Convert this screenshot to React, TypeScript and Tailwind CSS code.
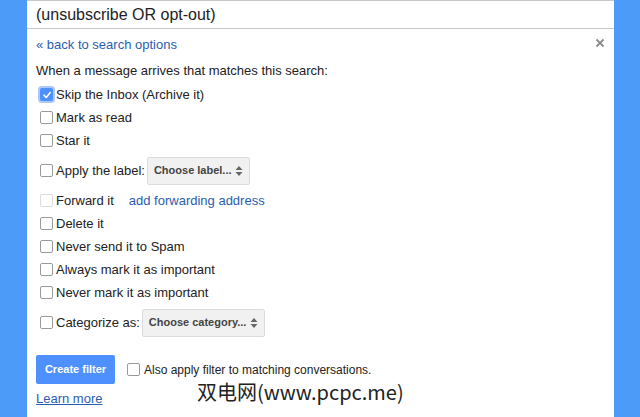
import React from "react";

function Box({ checked = false, disabled = false }: { checked?: boolean; disabled?: boolean }) {
  if (checked) {
    return (
      <span className="relative flex h-[13px] w-[13px] shrink-0 items-center justify-center rounded-[2px] bg-[#4d90fe] shadow-[0_0_0_2px_#a9c8fb]">
        <svg width="10" height="10" viewBox="0 0 10 10">
          <path d="M2 5.2 L4.2 7.4 L8.2 2.6" fill="none" stroke="white" strokeWidth="1.6" strokeLinecap="round" strokeLinejoin="round" />
        </svg>
      </span>
    );
  }
  return (
    <span
      className={
        disabled
          ? "block h-[13px] w-[13px] shrink-0 rounded-[2px] border border-[#dcdcdc] bg-white"
          : "block h-[13px] w-[13px] shrink-0 rounded-[2px] border border-[#9a9a9a] bg-white"
      }
    />
  );
}

function Row({ label, checked, disabled, children }: { label: string; checked?: boolean; disabled?: boolean; children?: React.ReactNode }) {
  return (
    <div className="flex h-[23px] items-center pl-[4px]">
      <Box checked={checked} disabled={disabled} />
      <span className="ml-[3px] text-[13px] text-[#222]">{label}</span>
      {children}
    </div>
  );
}

function Select({ text, w }: { text: string; w: string }) {
  return (
    <div className={`flex h-[28px] items-center justify-between rounded-[2px] border border-[#dcdcdc] bg-[#f1f1f1] pl-[6px] pr-[6px] ${w}`}>
      <span className="text-[11px] font-bold text-[#444]">{text}</span>
      <svg width="8" height="12" viewBox="0 0 8 12">
        <path d="M4 1 L7.5 5 L0.5 5 Z" fill="#666" />
        <path d="M4 11 L7.5 7 L0.5 7 Z" fill="#666" />
      </svg>
    </div>
  );
}

export default function App() {
  return (
    <div className="flex h-[417px] w-[640px] overflow-hidden bg-[#4c9bf8]" style={{ fontFamily: '"Liberation Sans", Arial, sans-serif' }}>
      <div className="w-[27px] shrink-0 bg-[#4c9bf8]" />
      <div className="relative flex w-[587px] shrink-0 flex-col bg-white">
        <div className="flex h-[29px] items-center border-b border-t border-[#c8c8c8] pl-[9px]">
          <span className="text-[16px] text-[#222]">(unsubscribe OR opt-out)</span>
        </div>
        <div className="absolute right-[9px] top-[38px] text-[#888]">
          <svg width="10" height="10" viewBox="0 0 10 10">
            <path d="M1.5 1.5 L8.5 8.5 M8.5 1.5 L1.5 8.5" stroke="#8a8a8a" strokeWidth="1.8" />
          </svg>
        </div>
        <div className="flex flex-col pl-[9px]">
          <div className="mt-[6px] flex h-[20px] items-center">
            <span className="text-[13px] text-[#2a5db0]">« back to search options</span>
          </div>
          <div className="mt-[6px] flex h-[20px] items-center">
            <span className="text-[13px] text-[#222]">When a message arrives that matches this search:</span>
          </div>
          <div className="mt-[2px]" />
          <Row label="Skip the Inbox (Archive it)" checked />
          <Row label="Mark as read" />
          <Row label="Star it" />
          <div className="flex h-[37px] items-center pl-[4px]">
            <Box />
            <span className="ml-[3px] text-[13px] text-[#222]">Apply the label:</span>
            <div className="ml-[2px]">
              <Select text="Choose label..." w="w-[103px]" />
            </div>
          </div>
          <div className="flex h-[23px] items-center pl-[4px]">
            <Box disabled />
            <span className="ml-[3px] text-[13px] text-[#222]">Forward it</span>
            <span className="ml-[15px] text-[13px] text-[#2a5db0]">add forwarding address</span>
          </div>
          <Row label="Delete it" />
          <Row label="Never send it to Spam" />
          <Row label="Always mark it as important" />
          <Row label="Never mark it as important" />
          <div className="flex h-[37px] items-center pl-[4px]">
            <Box />
            <span className="ml-[3px] text-[13px] text-[#222]">Categorize as:</span>
            <div className="ml-[2px]">
              <Select text="Choose category..." w="w-[123px]" />
            </div>
          </div>
          <div className="mt-[14px] flex h-[29px] items-center">
            <div className="flex h-[29px] w-[79px] shrink-0 items-center justify-center rounded-[2px] bg-[#4d90fe]">
              <span className="text-[11px] font-bold text-white">Create filter</span>
            </div>
            <div className="ml-[12px] shrink-0">
              <Box />
            </div>
            <span className="ml-[4px] text-[12px] text-[#222]">Also apply filter to matching conversations.</span>
          </div>
          <div className="relative mt-[5px] flex h-[20px] items-center">
            <span className="text-[13px] text-[#2a5db0] underline">Learn more</span>
            <span
              className="absolute left-[161px] top-[-12px] text-[20px] text-[#222]"
              style={{ fontFamily: '"Noto Sans CJK SC", "Liberation Sans", sans-serif' }}
            >
              双电网(www.pcpc.me)
            </span>
          </div>
        </div>
      </div>
      <div className="flex-1 bg-[#4c9bf8]" />
    </div>
  );
}
